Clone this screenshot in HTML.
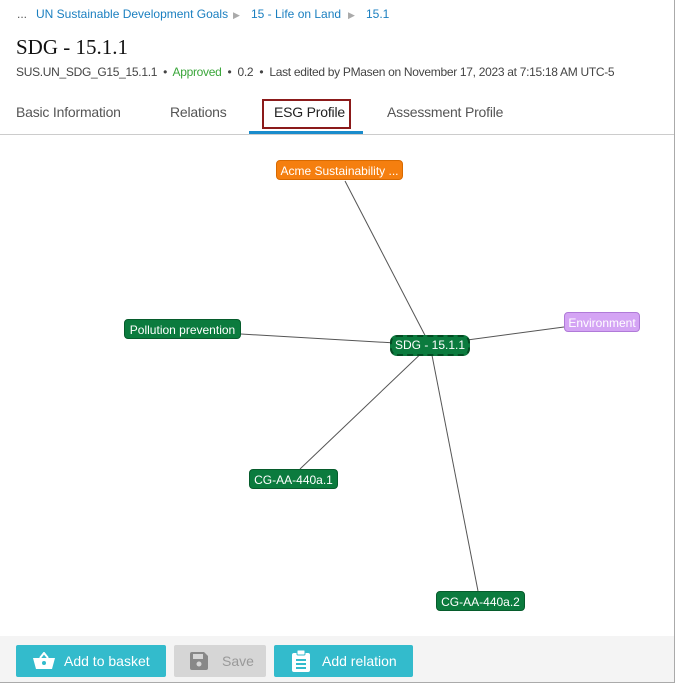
<!DOCTYPE html>
<html><head><style>
body{margin:0;width:675px;height:683px;overflow:hidden;background:#fff;font-family:"Liberation Sans",sans-serif;}
.wrap{position:absolute;left:0;top:0;width:674px;height:682px;border-right:1px solid #aaa;border-bottom:1px solid #aaa;}
.t{position:absolute;white-space:nowrap;}
.bc{top:7px;font-size:12px;color:#1a7fc0;}
.node{position:absolute;height:20px;border-radius:4px;color:#fff;font-size:12px;line-height:20px;text-align:center;box-sizing:border-box;}
.btn{position:absolute;top:645px;height:32px;border-radius:2px;background:#33bbcc;color:#fff;font-size:14px;line-height:32px;}
</style></head><body><div class="wrap">
<div class="t bc" style="left:17px;color:#555">...</div>
<div class="t bc" style="left:36px">UN Sustainable Development Goals</div>
<div class="t bc" style="left:233px;color:#aaa;font-size:9px;top:10px">▶</div>
<div class="t bc" style="left:251px">15 - Life on Land</div>
<div class="t bc" style="left:348px;color:#aaa;font-size:9px;top:10px">▶</div>
<div class="t bc" style="left:366px">15.1</div>
<div class="t" style="left:16px;top:35px;font-family:'Liberation Serif',serif;font-size:21px;color:#111">SDG - 15.1.1</div>
<div class="t" style="left:16px;top:65px;font-size:12px;color:#444;letter-spacing:-0.3px">SUS.UN_SDG_G15_15.1.1 &nbsp;•&nbsp; <span style="color:#3aa63a">Approved</span> &nbsp;•&nbsp; 0.2 &nbsp;•&nbsp; Last edited by PMasen on November 17, 2023 at 7:15:18 AM UTC-5</div>
<div class="t" style="left:16px;top:104px;font-size:14px;color:#555;letter-spacing:-0.2px">Basic Information</div>
<div class="t" style="left:170px;top:104px;font-size:14px;color:#555;letter-spacing:-0.2px">Relations</div>
<div style="position:absolute;left:262px;top:99px;width:85px;height:26px;border:2px solid #8b1a1a"></div>
<div class="t" style="left:274px;top:104px;font-size:14px;color:#222;letter-spacing:-0.2px">ESG Profile</div>
<div style="position:absolute;left:249px;top:131px;width:114px;height:3px;background:#1a8ccc"></div>
<div class="t" style="left:387px;top:104px;font-size:14px;color:#555;letter-spacing:-0.2px">Assessment Profile</div>
<div style="position:absolute;left:0;top:134px;width:674px;height:1px;background:#ccc"></div>
<svg style="position:absolute;left:0;top:0" width="675" height="683"><g stroke="#555" stroke-width="1">
<line x1="430" y1="345" x2="345" y2="181"/><line x1="430" y1="345" x2="241" y2="334"/>
<line x1="430" y1="345" x2="564" y2="327"/><line x1="430" y1="345" x2="300" y2="469"/>
<line x1="430" y1="345" x2="478" y2="591"/></g></svg>
<div class="node" style="left:276px;top:160px;width:127px;background:#f57f0f;border:1px solid #d86a00">Acme Sustainability ...</div>
<div class="node" style="left:124px;top:319px;width:117px;background:#0b7b3e;border:1px solid #065c2c">Pollution prevention</div>
<div class="node" style="left:564px;top:312px;width:76px;background:#d4a4f4;border:1px solid #b07ad8">Environment</div>
<div class="node" style="left:390px;top:335px;width:80px;height:21px;background:#0b7b3e;border:2px dashed #044a22;border-radius:7px;line-height:17px">SDG - 15.1.1</div>
<div class="node" style="left:249px;top:469px;width:89px;background:#0b7b3e;border:1px solid #065c2c">CG-AA-440a.1</div>
<div class="node" style="left:436px;top:591px;width:89px;background:#0b7b3e;border:1px solid #065c2c">CG-AA-440a.2</div>
<div style="position:absolute;left:0;top:636px;width:674px;height:46px;background:#f4f4f4"></div>
<div class="btn" style="left:16px;width:150px"><svg style="position:absolute;left:17px;top:7px" width="22" height="18"><path d="M7 6 L11 1 L15 6" stroke="#fff" stroke-width="2" fill="none"/><path d="M0 6 H22 L19 17 H3 Z" fill="#fff"/><circle cx="11" cy="11" r="2" fill="#33bbcc"/></svg><span style="position:absolute;left:48px">Add to basket</span></div>
<div class="btn" style="left:174px;width:92px;background:#d6d6d6;color:#999"><svg style="position:absolute;left:16px;top:7px" width="18" height="18"><path d="M0 2 Q0 0 2 0 H14 L18 4 V16 Q18 18 16 18 H2 Q0 18 0 16Z" fill="#888"/><rect x="3" y="2" width="10" height="5" fill="#d6d6d6"/><circle cx="9" cy="12" r="2.5" fill="#d6d6d6"/></svg><span style="position:absolute;left:48px">Save</span></div>
<div class="btn" style="left:274px;width:139px"><svg style="position:absolute;left:18px;top:5px" width="18" height="22"><rect x="0" y="3" width="18" height="19" rx="2" fill="#fff"/><rect x="5" y="0" width="8" height="5" rx="1" fill="#fff" stroke="#33bbcc"/><rect x="4" y="9" width="10" height="2" fill="#33bbcc"/><rect x="4" y="13" width="10" height="2" fill="#33bbcc"/><rect x="4" y="17" width="10" height="2" fill="#33bbcc"/></svg><span style="position:absolute;left:48px">Add relation</span></div>
</div></body></html>
